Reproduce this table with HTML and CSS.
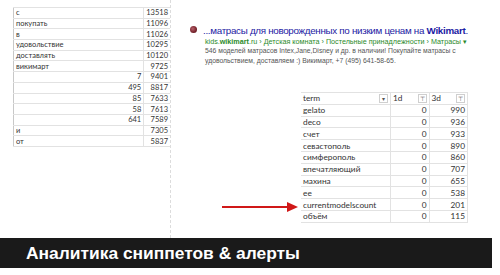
FILE: index.html
```html
<!DOCTYPE html>
<html lang="ru">
<head>
<meta charset="utf-8">
<link rel="stylesheet" href="styles.css">
</head>
<body>
<div class="slide">
  <div class="main">
    <div class="left">
      <table class="words">
        <tr><td>с</td><td class="n">13518</td></tr>
        <tr><td>покупать</td><td class="n">11096</td></tr>
        <tr><td>в</td><td class="n">11026</td></tr>
        <tr><td>удовольствие</td><td class="n">10295</td></tr>
        <tr><td>доставлять</td><td class="n">10120</td></tr>
        <tr><td>викимарт</td><td class="n">9725</td></tr>
        <tr><td class="n">7</td><td class="n">9401</td></tr>
        <tr><td class="n">495</td><td class="n">8817</td></tr>
        <tr><td class="n">85</td><td class="n">7633</td></tr>
        <tr><td class="n">58</td><td class="n">7613</td></tr>
        <tr><td class="n">641</td><td class="n">7589</td></tr>
        <tr><td>и</td><td class="n">7305</td></tr>
        <tr><td>от</td><td class="n">5837</td></tr>
      </table>
    </div>
    <div class="right">
      <div class="snippet">
        <span class="favicon"></span>
        <div class="snip-body">
          <div class="title">...матрасы для новорожденных по низким ценам на <b>Wikimart</b>.</div>
          <div class="url">kids.<b>wikimart</b>.ru › Детская комната › Постельные принадлежности › Матрасы ▾</div>
          <div class="desc">546 моделей матрасов Intex,Jane,Disney и др. в наличии! Покупайте матрасы с<br>удовольствием, доставляем :) Викимарт, +7 (495) 641-58-65.</div>
        </div>
      </div>
      <table class="terms">
        <tr class="head">
          <td><div class="hc"><span>term</span><span class="btn">▾</span></div></td>
          <td><div class="hc"><span>1d</span><span class="btn flt">⊤</span></div></td>
          <td><div class="hc"><span>3d</span><span class="btn flt">⊤</span></div></td>
        </tr>
        <tr><td>gelato</td><td class="n">0</td><td class="n">990</td></tr>
        <tr><td>deco</td><td class="n">0</td><td class="n">936</td></tr>
        <tr><td>счет</td><td class="n">0</td><td class="n">933</td></tr>
        <tr><td>севастополь</td><td class="n">0</td><td class="n">890</td></tr>
        <tr><td>симферополь</td><td class="n">0</td><td class="n">860</td></tr>
        <tr><td>впечатляющий</td><td class="n">0</td><td class="n">707</td></tr>
        <tr><td>махина</td><td class="n">0</td><td class="n">655</td></tr>
        <tr><td>ее</td><td class="n">0</td><td class="n">538</td></tr>
        <tr><td>currentmodelscount</td><td class="n">0</td><td class="n">201</td></tr>
        <tr><td>объём</td><td class="n">0</td><td class="n">115</td></tr>
      </table>
    </div>
    <svg class="arrow" width="80" height="12" viewBox="0 0 80 12">
      <line x1="1" y1="6" x2="68" y2="6" stroke="#d01818" stroke-width="2.2"/>
      <polygon points="66,1 77,6 66,11" fill="#d01818"/>
    </svg>
  </div>
  <div class="bar"><span>Аналитика сниппетов &amp; алерты</span></div>
</div>
</body>
</html>
```

FILE: styles.css
```css
html, body {
  margin: 0;
  padding: 0;
  background: #fff;
}
.slide {
  width: 500px;
  height: 275px;
  overflow: hidden;
}
.main {
  position: relative;
  display: flex;
  height: 238px;
}
.left {
  padding: 7px 0 0 13px;
  width: 157px;
  box-sizing: content-box;
}
table {
  border-collapse: collapse;
  font-family: Lato, "Open Sans", sans-serif;
  color: #333;
}
.words {
  width: 157px;
  font-size: 7.5px;
  border-left: 1px solid #c8c8c8;
}
.words td {
  height: 9.7px;
  padding: 0 2px;
  border-top: 1px solid #e2e2e2;
  border-bottom: 1px solid #e2e2e2;
  line-height: 9px;
  white-space: nowrap;
}
.words td:first-child {
  width: 131px;
  border-right: 1px solid #e2e2e2;
}
.words td.n { text-align: right; }
.right {
  flex: 1;
  border-left: 1px dashed #dcdcdc;
  display: flex;
  flex-direction: column;
}
.snippet {
  display: flex;
  align-items: flex-start;
  margin: 25px 0 0 19px;
  font-family: Arial, "Liberation Sans", sans-serif;
}
.favicon {
  width: 7px;
  height: 7px;
  border-radius: 50%;
  background: radial-gradient(circle at 40% 40%, #b8606a, #6b1a22 70%);
  margin: 1px 6px 0 0;
  flex: none;
}
.title {
  color: #1c1aa3;
  font-size: 9.8px;
  letter-spacing: -0.3px;
  line-height: 12px;
  white-space: nowrap;
}
.url {
  color: #2a8a2a;
  font-size: 7.2px;
  line-height: 9px;
  margin-left: 2px;
  white-space: nowrap;
}
.desc {
  color: #555;
  font-size: 6.8px;
  line-height: 9.5px;
  margin-left: 2px;
}
.terms {
  margin: 27px 0 0 130px;
  width: 167px;
  font-size: 8.3px;
}
.terms td {
  height: 10.8px;
  padding: 0 2px;
  border: 1px solid #e2e2e2;
  line-height: 10px;
  white-space: nowrap;
}
.terms td:first-child { width: 85px; border-left: none; }
.terms td.n { text-align: right; }
.hc {
  display: flex;
  justify-content: space-between;
  align-items: center;
}
.btn {
  width: 7px;
  height: 7px;
  border: 1px solid #cfcfcf;
  font-size: 6px;
  line-height: 7px;
  text-align: center;
  color: #555;
}
.arrow {
  position: absolute;
  left: 221px;
  top: 201px;
}
.bar {
  width: 492px;
  height: 30px;
  background: #1a1a1a;
  display: flex;
  align-items: center;
  padding-left: 26px;
  box-sizing: border-box;
}
.bar span {
  color: #fff;
  font-family: Arial, "Liberation Sans", sans-serif;
  font-weight: bold;
  font-size: 17.4px;
}
```
